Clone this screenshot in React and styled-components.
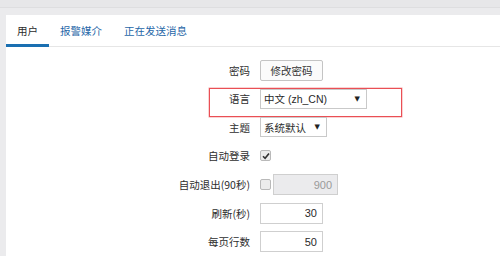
import React from 'react';
import styled, {createGlobalStyle} from 'styled-components';

const GlobalStyle = createGlobalStyle`
    html, body {
        margin: 0;
        padding: 0;
        background: #ebebed;
    }
    body {
        font-family: "Liberation Sans", "Noto Sans CJK SC", sans-serif;
        color: #333;
        width: 500px;
        height: 256px;
        overflow: hidden;
    }
`

const Page = styled.div`
    width: 500px;
    height: 256px;
    background-color: #ebebed;
    display: flex;
    flex-direction: column;
`

const TopStrip = styled.div`
    height: 8px;
    background-color: #e7e7e9;
    border-bottom: 1px solid #dedee0;
`

const SubStrip = styled.div`
    height: 9px;
    background-color: #ebebed;
`

const Panel = styled.div`
    flex: 1;
    margin-left: 6px;
    background-color: #fff;
`

const TabBar = styled.div`
    display: flex;
    height: 31px;
    border-bottom: 1px solid #e6e6e6;
`

const Tab = styled.div`
    padding: 0 11px;
    display: flex;
    align-items: center;
    font-size: 10.5px;
    font-family: "Noto Sans CJK SC", sans-serif;
    color: ${props => props.active ? '#2b2b2b' : '#1f67a8'};
    border-bottom: 3px solid ${props => props.active ? '#1a6fb1' : 'transparent'};
    margin-bottom: -1px;
    padding-top: 2px;
`

const Form = styled.div`
    padding-top: 9px;
    display: flex;
    flex-direction: column;
`

const Row = styled.div`
    position: relative;
    display: flex;
    align-items: center;
    height: 28.6px;
    gap: 10px;
`

const Label = styled.div`
    width: 244px;
    text-align: right;
    font-size: 10.5px;
    font-family: "Noto Sans CJK SC", sans-serif;
    color: #2e2e2e;
    white-space: nowrap;
`

const Button = styled.div`
    width: 61px;
    height: 19px;
    border: 1px solid #c4c4c4;
    border-radius: 2px;
    background: #fbfbfb;
    display: flex;
    align-items: center;
    justify-content: center;
    font-size: 10.5px;
    font-family: "Noto Sans CJK SC", sans-serif;
    color: #333;
`

const Select = styled.div`
    width: ${props => props.width}px;
    height: 18px;
    border: 1px solid #c9c9c9;
    background: #fff;
    display: flex;
    align-items: center;
    justify-content: space-between;
    padding: 0 6px 0 3px;
    box-sizing: content-box;
    font-size: 10.5px;
    font-family: ${props => props.cjk ? '"Noto Sans CJK SC", sans-serif' : '"Liberation Sans", "Noto Sans CJK SC", sans-serif'};
    color: #2a2a2a;
`

const Arrow = styled.span`
    font-size: 7px;
    color: #222;
    font-family: "DejaVu Sans", sans-serif;
`

const Check = styled.div`
    width: 9px;
    height: 9px;
    border: 1px solid #b9b9b9;
    border-radius: 2px;
    background: #ececec;
    display: flex;
    align-items: center;
    justify-content: center;
`

const Input = styled.div`
    width: ${props => props.width}px;
    height: 19px;
    border: 1px solid #cfcfcf;
    background: ${props => props.disabled ? '#ebebed' : '#fff'};
    color: ${props => props.disabled ? '#9a9a9a' : '#2a2a2a'};
    display: flex;
    align-items: center;
    justify-content: flex-end;
    padding-right: 5px;
    font-size: 11px;
    font-family: "Liberation Sans", sans-serif;
`

const Inline = styled.div`
    display: flex;
    align-items: center;
    gap: 2px;
`

const Highlight = styled.div`
    position: absolute;
    left: 203px;
    top: 4px;
    width: 191px;
    height: 27px;
    border: 1px solid #ea4f55;
    box-shadow: 0 0 0 0.5px rgba(234, 79, 85, 0.5);
    pointer-events: none;
`

const CheckMark = () => (
    <svg width="8" height="8" viewBox="0 0 8 8">
        <path d="M1 4.2 L3.1 6.3 L7 1.4" stroke="#333" strokeWidth="1.6" fill="none" />
    </svg>
)

const App = () => {
    return (
        <Page>
            <GlobalStyle />
            <TopStrip />
            <SubStrip />
            <Panel>
                <TabBar>
                    <Tab active>用户</Tab>
                    <Tab>报警媒介</Tab>
                    <Tab>正在发送消息</Tab>
                </TabBar>
                <Form>
                    <Row>
                        <Label>密码</Label>
                        <Button>修改密码</Button>
                    </Row>
                    <Row>
                        <Label>语言</Label>
                        <Select width={96}>
                            <span>中文 (zh_CN)</span>
                            <Arrow>▼</Arrow>
                        </Select>
                        <Highlight />
                    </Row>
                    <Row>
                        <Label>主题</Label>
                        <Select width={56} cjk>
                            <span>系统默认</span>
                            <Arrow>▼</Arrow>
                        </Select>
                    </Row>
                    <Row>
                        <Label>自动登录</Label>
                        <Check><CheckMark /></Check>
                    </Row>
                    <Row>
                        <Label>自动退出(90秒)</Label>
                        <Inline>
                            <Check />
                            <Input width={58} disabled>900</Input>
                        </Inline>
                    </Row>
                    <Row>
                        <Label>刷新(秒)</Label>
                        <Input width={56}>30</Input>
                    </Row>
                    <Row>
                        <Label>每页行数</Label>
                        <Input width={56}>50</Input>
                    </Row>
                </Form>
            </Panel>
        </Page>
    )
}

export default App
